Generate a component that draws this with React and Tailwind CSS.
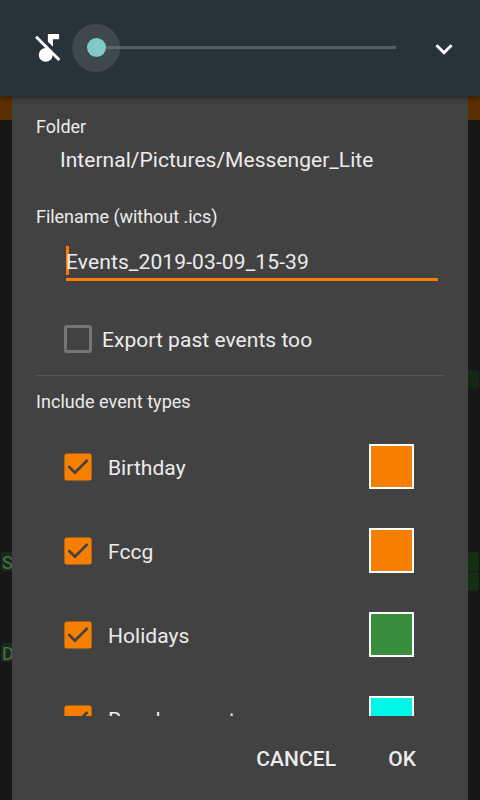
import React from 'react';

const eventTypes = [
  { name: 'Birthday', color: 'bg-[#f77f00]' },
  { name: 'Fccg', color: 'bg-[#f77f00]' },
  { name: 'Holidays', color: 'bg-[#388e3c]' },
  { name: 'Regular event', color: 'bg-[#00f7e7]' },
];

const VolumePanel = () => (
  <div className="relative z-10 flex h-24 items-center bg-[#283339] shadow-[0_2px_6px_rgba(0,0,0,0.45)]">
    <svg className="ml-[30px] h-9 w-9" viewBox="0 0 36 36" fill="none">
      <path d="M17.9 4h11.2v5.2H23v7.6l-5.1-5.1z" fill="#fff" />
      <circle cx="15.7" cy="24.9" r="6.9" fill="#fff" />
      <path d="M15.5 16.5l8 8-2 1z" fill="#fff" />
      <path d="M6.1 6.8L29.3 30" stroke="#fff" strokeWidth="3" />
    </svg>
    <div className="ml-1.5 -mt-px flex h-12 w-[324px] items-center">
      <div className="flex h-12 w-12 shrink-0 items-center justify-end rounded-full bg-[#3e484e]">
        <div className="h-[19px] w-[19px] shrink-0 rounded-full bg-[#80cbc4]" />
        <div className="h-[3px] w-[14px] bg-[#5b656b]" />
      </div>
      <div className="h-[3px] grow bg-[#535d62]" />
    </div>
    <svg className="ml-[30px] h-9 w-9" viewBox="0 0 36 36" fill="none" stroke="#fff" strokeWidth="3">
      <path d="M10.5 15.2l7.5 7.5 7.5-7.5" />
    </svg>
  </div>
);

// Dimmed calendar behind the dialog
const Backdrop = () => (
  <div className="absolute inset-0 bg-[#171717]">
    <div className="h-[120px] bg-[#5a2e00]" />
    <div className="flex justify-between text-[18px] leading-[21px] text-[#5d6a5d]">
      <div className="pl-px">
        <div className="mt-[432px] h-[19px] w-6 rounded-[3px] bg-[#142f16] pl-px">S</div>
        <div className="mt-[72px] h-[19px] w-6 rounded-[3px] bg-[#142f16] pl-px">D</div>
      </div>
      <div className="w-3 pr-px">
        <div className="mt-[250px] h-[19px] rounded-r-[3px] bg-[#152617]" />
        <div className="mt-[163px] h-[19px] rounded-r-[3px] bg-[#142f16]" />
        <div className="mt-px h-[19px] rounded-r-[3px] bg-[#142f16]" />
      </div>
    </div>
  </div>
);

const EventType = ({ name, color }) => (
  <div className="flex h-[84px] items-start pl-7 pr-[54px]">
    <svg className="mt-[9px] h-7 w-7" viewBox="0 0 28 28" fill="none">
      <rect x="0.4" y="0.4" width="27.2" height="27.2" rx="2.5" fill="#f77f00" />
      <path d="M4.5 13.2l6.4 6.4L23.5 7" stroke="#424242" strokeWidth="2.7" />
    </svg>
    <span className="ml-4 mt-[9px] text-[21px] leading-[30px] tracking-[0.04px]">{name}</span>
    <div className={`ml-auto h-[45px] w-[45px] border-2 border-white ${color}`} />
  </div>
);

const ExportDialog = () => (
  <div className="relative mx-3 flex h-[704px] flex-col bg-[#424242] text-[#ececec]">
    <div className="h-[620px] overflow-hidden pl-6 pt-5">
      <div className="text-[18px] leading-[22px]">Folder</div>
      <div className="ml-6 mt-[7px] text-[21px] leading-[30px] tracking-[0.03px]">Internal/Pictures/Messenger_Lite</div>
      <div className="mt-[31px] text-[18px] leading-[22px] tracking-[-0.04px]">Filename (without .ics)</div>
      <div className="relative ml-[30px] mt-[18px] h-[35px] w-[372px] border-b-[3px] border-[#f77f00]">
        <div className="absolute left-0 top-0 h-[29px] w-[3px] bg-[#f77f00]" />
        <div className="relative text-[21px] leading-[33px] tracking-[0.12px]">Events_2019-03-09_15-39</div>
      </div>
      <div className="mt-11 flex h-[30px] items-center">
        <div className="-mt-0.5 ml-7 h-7 w-7 rounded-[3px] border-[3px] border-[#757575]" />
        <span className="ml-2.5 text-[21px] leading-[30px] tracking-[0.04px]">Export past events too</span>
      </div>
      <div className="mr-6 mt-5 h-px bg-[#555555]" />
      <div className="mt-[15px] text-[18px] leading-[22px] tracking-[0.04px]">Include event types</div>
      <div className="mt-[31px]">
        {eventTypes.map((type) => (
          <EventType key={type.name} {...type} />
        ))}
      </div>
    </div>
    <div className="flex grow items-center justify-end pr-[52px] pt-1 text-[21px] font-medium">
      <button className="mr-[52px] tracking-[0.1px]">CANCEL</button>
      <button>OK</button>
    </div>
  </div>
);

const App = () => (
  <div className="relative h-[800px] w-[480px] overflow-hidden font-['Roboto',sans-serif]">
    <Backdrop />
    <VolumePanel />
    <ExportDialog />
  </div>
);

export default App;
